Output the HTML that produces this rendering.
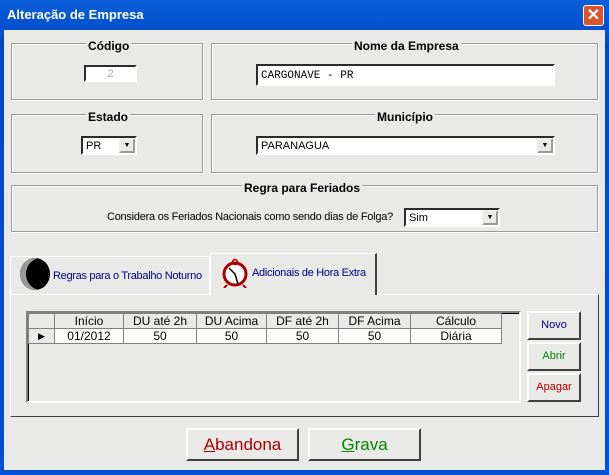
<html><head><style>
body{margin:0;width:609px;height:475px;overflow:hidden;font-family:"Liberation Sans",Arial,sans-serif;font-size:11px;}
#win{position:absolute;left:0;top:0;width:609px;height:475px;background:linear-gradient(#0a5fd8,#0046c8 10%,#0050d8);}
#title{position:absolute;left:7px;top:7px;color:#fff;font-weight:bold;font-size:13px;}
#close{position:absolute;left:583px;top:5px;width:21px;height:21px;background:#d9542e;border:1px solid #fff;border-radius:3px;color:#fff;font-weight:bold;font-size:16px;text-align:center;line-height:20px;box-sizing:border-box}
.a{position:absolute;box-sizing:border-box}
.gb{border:1px solid #9a9a9a;box-shadow:inset 1px 1px 0 #fff,1px 1px 0 #fff}
.gl{position:absolute;font-weight:bold;font-size:12px;background:#e9e9e7;padding:0 2px;color:#000}
.in{background:#fff;border:2px inset #aaa;border-color:#808080 #fff #fff #808080;font-size:11px;padding:3px 3px}
.dd{position:absolute;right:0;top:0;width:16px;height:100%;background:#e9e9e7;border:2px outset #eee;box-sizing:border-box;font-size:7px;text-align:center;line-height:12px}
.btn{background:#e9e9e7;border:2px solid;border-color:#fff #404040 #404040 #fff;text-align:center;font-size:12px}
table{border-collapse:collapse;font-size:12px}
td{border:1px solid #808080;text-align:center;padding:0;height:14px}
</style></head><body><div id="win">
<div id="title">Alteração de Empresa</div><div id="close">✕</div>
</div>
<div class="a" style="left:4px;top:30px;width:601px;height:440px;background:#e9e9e7"></div>

<div class="a gb" style="left:11px;top:43px;width:192px;height:57px"></div>
<div class="gl" style="left:86px;top:39px">Código</div>
<div class="a in" style="left:84px;top:65px;width:53px;height:17px;color:#aaa;text-align:center;padding:1px">2</div>

<div class="a gb" style="left:211px;top:43px;width:387px;height:57px"></div>
<div class="gl" style="left:352px;top:39px">Nome da Empresa</div>
<div class="a in" style="left:256px;top:64px;width:299px;height:22px;font-family:'Liberation Mono',monospace;font-size:11px;padding-top:4px">CARGONAVE - PR</div>

<div class="a gb" style="left:11px;top:114px;width:192px;height:59px"></div>
<div class="gl" style="left:86px;top:110px">Estado</div>
<div class="a in" style="left:81px;top:136px;width:56px;height:19px;padding:2px 3px">PR<div class="dd">▼</div></div>

<div class="a gb" style="left:211px;top:114px;width:387px;height:59px"></div>
<div class="gl" style="left:375px;top:110px">Município</div>
<div class="a in" style="left:256px;top:136px;width:299px;height:19px;padding:2px 3px">PARANAGUA<div class="dd">▼</div></div>

<div class="a gb" style="left:11px;top:185px;width:587px;height:47px"></div>
<div class="gl" style="left:242px;top:181px">Regra para Feriados</div>
<div class="a" style="left:107px;top:211px;font-size:11px;letter-spacing:-0.25px">Considera os Feriados Nacionais como sendo dias de Folga?</div>
<div class="a in" style="left:404px;top:208px;width:96px;height:19px;padding:2px 3px">Sim<div class="dd">▼</div></div>

<div class="a" style="left:10px;top:256px;width:200px;height:38px;border:1px solid #fff;border-bottom:none;background:#e9e9e7"></div>
<div class="a" style="left:20px;top:258px;width:30px;height:32px;border-radius:50%;background:#000;box-shadow:inset 6px 0 0 #999"></div>
<div class="a" style="left:53px;top:270px;color:#000080;font-size:11px;letter-spacing:-0.3px">Regras para o Trabalho Noturno</div>
<div class="a" style="left:210px;top:253px;width:167px;height:42px;border:1px solid #fff;border-right:2px solid #404040;border-bottom:none;background:#e9e9e7;z-index:2"></div>
<svg class="a" style="left:221px;top:258px;z-index:3" width="28" height="30"><circle cx="14" cy="16" r="11" fill="#fff" stroke="#a00" stroke-width="3"/><circle cx="14" cy="4" r="2.5" fill="none" stroke="#a00" stroke-width="1.5"/><path d="M14 16L8 10M14 16L17 26" stroke="#000" stroke-width="1.5"/><path d="M6 27l-3 3M22 27l3 3" stroke="#a00" stroke-width="2"/></svg>
<div class="a" style="left:252px;top:267px;color:#000080;font-size:11px;z-index:3;letter-spacing:-0.3px">Adicionais de Hora Extra</div>

<div class="a" style="left:10px;top:294px;width:589px;height:123px;border:1px solid;border-color:#fff #404040 #404040 #fff;background:#e9e9e7"></div>
<div class="a" style="left:26px;top:311px;width:495px;height:92px;border:2px solid;border-color:#808080 #fff #fff #808080;background:#e9e9e7;box-shadow:inset 1px 1px 0 #000"></div>
<table class="a" style="left:28px;top:313px">
<tr><td style="width:25px"></td><td style="width:68px">Início</td><td style="width:72px">DU até 2h</td><td style="width:69px">DU Acima</td><td style="width:71px">DF até 2h</td><td style="width:71px">DF Acima</td><td style="width:90px">Cálculo</td></tr>
<tr style="background:#fff"><td style="background:#e9e9e7;font-size:9px">▶</td><td>01/2012</td><td>50</td><td>50</td><td>50</td><td>50</td><td>Diária</td></tr></table>
<div class="a btn" style="left:527px;top:311px;width:54px;height:29px;line-height:25px;color:#000080;font-size:11px">Novo</div>
<div class="a btn" style="left:527px;top:342px;width:54px;height:29px;line-height:25px;color:#080;font-size:11px">Abrir</div>
<div class="a btn" style="left:527px;top:373px;width:54px;height:29px;line-height:25px;color:#a00;font-size:11px">Apagar</div>

<div class="a btn" style="left:186px;top:428px;width:113px;height:33px;line-height:29px;color:#a00;font-size:17px"><u>A</u>bandona</div>
<div class="a btn" style="left:308px;top:428px;width:113px;height:33px;line-height:29px;color:#080;font-size:17px"><u>G</u>rava</div>
</body></html>
